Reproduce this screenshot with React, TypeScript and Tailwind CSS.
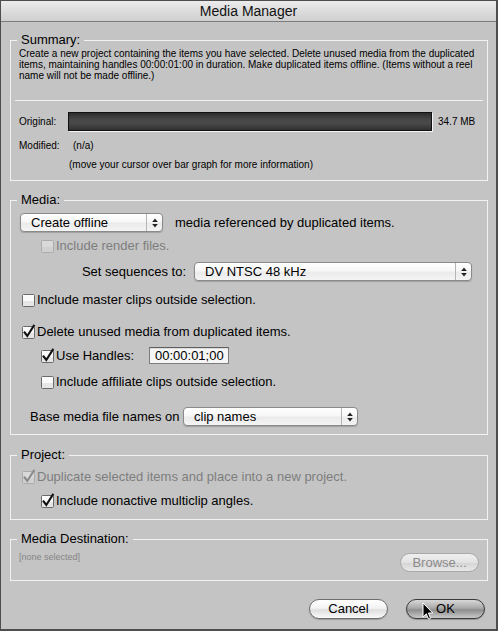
import React from "react";

function CheckBox({ checked = false, disabled = false }: { checked?: boolean; disabled?: boolean }) {
  const stroke = disabled ? "#ababab" : "#6a6a6a";
  const fill = disabled ? "#d9d9d9" : "#fafafa";
  const lower = disabled ? "#d0d0d0" : "#e6e6e6";
  const mark = disabled ? "#8c8c8c" : "#111111";
  return (
    <svg width="13" height="14" viewBox="0 0 13 14" className="shrink-0 overflow-visible">
      <rect x="0.5" y="1.5" width="12" height="12" rx="1" fill={fill} stroke={stroke} />
      <rect x="1" y="8" width="11" height="5" fill={lower} />
      {checked && (
        <path
          d="M2.6 7.4 L5.3 11 L11.8 0.8"
          fill="none"
          stroke={mark}
          strokeWidth="2.1"
          strokeLinecap="square"
          strokeLinejoin="miter"
        />
      )}
    </svg>
  );
}

function CheckRow({
  label,
  checked,
  disabled,
  indent,
  className,
}: {
  label: string;
  checked?: boolean;
  disabled?: boolean;
  indent?: boolean;
  className: string;
}) {
  return (
    <div
      className={`${className} flex h-[14px] items-center gap-[2px] ${indent ? "pl-[30px]" : "pl-[11px]"} text-[13px] leading-[14px] whitespace-nowrap ${
        disabled ? "text-[#7e7e7e]" : "text-black"
      }`}
    >
      <CheckBox checked={checked} disabled={disabled} />
      <span>{label}</span>
    </div>
  );
}

function Arrows() {
  return (
    <div className="ml-auto flex h-full w-[16px] items-center justify-center border-l border-[#b4b4b4]">
      <svg width="6" height="10" viewBox="0 0 6 10">
        <path d="M3 0.5 L5.8 4 L0.2 4 Z" fill="#222" />
        <path d="M3 9.5 L5.8 6 L0.2 6 Z" fill="#222" />
      </svg>
    </div>
  );
}

const popupCls =
  "flex h-[19px] items-center rounded-[4px] border border-[#8a8a8a] bg-[linear-gradient(to_bottom,#ffffff,#f7f7f7_45%,#ebebeb_55%,#f4f4f4)] shadow-[0_1px_1px_rgba(0,0,0,0.18)] text-[13px] leading-[17px] text-black whitespace-nowrap overflow-hidden";

const fsCls = "border border-[#f2f2f2] px-0";
const legendCls = "ml-[6px] px-[4px] text-[13px] leading-[16px] text-black";

export default function App() {
  return (
    <div className="relative h-[631px] w-[498px] overflow-hidden border-t border-l border-r-2 border-b-2 border-[#4e4e4e] bg-[#c4c4c4] font-['Liberation_Sans',Arial,sans-serif] text-black">
      {/* title bar */}
      <div className="flex h-[21px] items-center justify-center border-b border-[#7c7c7c] bg-[linear-gradient(to_bottom,#ececec,#dadada_60%,#cfcfcf)] text-[14px] leading-[20px] text-[#111]">
        Media Manager
      </div>

      <div className="pl-[9px] pr-[8px]">
        {/* Summary */}
        <fieldset className={`mt-[10px] pb-[8px] ${fsCls}`}>
          <legend className={legendCls}>Summary:</legend>
          <p className="pl-[8px] text-[10px] leading-[11px] whitespace-nowrap">
            Create a new project containing the items you have selected. Delete unused media from the duplicated
            <br />
            items, maintaining handles 00:00:01:00 in duration. Make duplicated items offline. (Items without a reel
            <br />
            name will not be made offline.)
          </p>
          <div className="mx-[4px] mt-[19px] h-px bg-[#f2f2f2]" />
          <div className="mt-[11px] flex h-[19px] items-center pl-[8px] text-[10px]">
            <span className="w-[49px]">Original:</span>
            <div className="h-[19px] w-[364px] border border-[#111] bg-[linear-gradient(to_bottom,#2c2c2c,#454545_35%,#4a4a4a_60%,#303030)] shadow-[1px_1px_0_#f4f4f4]" />
            <span className="ml-[6px]">34.7 MB</span>
          </div>
          <div className="mt-[7px] flex h-[14px] items-center pl-[8px] text-[10px]">
            <span className="w-[54px]">Modified:</span>
            <span>(n/a)</span>
          </div>
          <div className="mt-[6px] h-[14px] pl-[58px] text-[10px] leading-[14px]">
            (move your cursor over bar graph for more information)
          </div>
        </fieldset>

        {/* Media */}
        <fieldset className={`mt-[11px] pb-[8px] ${fsCls}`}>
          <legend className={legendCls}>Media:</legend>
          <div className="mt-[5px] flex h-[19px] items-center pl-[9px]">
            <div className={`${popupCls} w-[143px]`}>
              <span className="pl-[10px]">Create offline</span>
              <Arrows />
            </div>
            <span className="ml-[12px] text-[13px]">media referenced by duplicated items.</span>
          </div>
          <CheckRow className="mt-[7px]" indent disabled label="Include render files." />
          <div className="mt-[9px] flex h-[19px] items-center">
            <span className="w-[175px] text-right text-[13px]">Set sequences to:</span>
            <div className={`${popupCls} ml-[8px] w-[278px]`}>
              <span className="pl-[10px]">DV NTSC 48 kHz</span>
              <Arrows />
            </div>
          </div>
          <CheckRow className="mt-[12px]" label="Include master clips outside selection." />
          <CheckRow className="mt-[18px]" checked label="Delete unused media from duplicated items." />
          <div className="mt-[8px] flex h-[17px] items-center pl-[30px] text-[13px]">
            <CheckBox checked />
            <span className="ml-[2px] w-[93px]">Use Handles:</span>
            <div className="flex h-[17px] w-[80px] items-center border border-[#7d7d7d] border-t-[#5e5e5e] bg-[#f6f6f6] pl-[5px] leading-[15px] shadow-[inset_0_1px_1px_rgba(0,0,0,0.12)]">
              00:00:01;00
            </div>
          </div>
          <CheckRow className="mt-[11px]" indent label="Include affiliate clips outside selection." />
          <div className="mt-[18px] flex h-[19px] items-center pl-[19px]">
            <span className="w-[153px] text-[13px]">Base media file names on</span>
            <div className={`${popupCls} w-[175px]`}>
              <span className="pl-[10px]">clip names</span>
              <Arrows />
            </div>
          </div>
        </fieldset>

        {/* Project */}
        <fieldset className={`mt-[12px] pb-[11px] ${fsCls}`}>
          <legend className={legendCls}>Project:</legend>
          <CheckRow className="mt-[7px]" checked disabled label="Duplicate selected items and place into a new project." />
          <CheckRow className="mt-[10px]" indent checked label="Include nonactive multiclip angles." />
        </fieldset>

        {/* Media Destination */}
        <fieldset className={`mt-[11px] pb-[8px] ${fsCls}`}>
          <legend className={legendCls}>Media Destination:</legend>
          <div className="mt-[6px] flex h-[19px] items-start justify-between pl-[8px] pr-[8px]">
            <span className="-mt-[2px] text-[9px] leading-[12px] text-[#858585]">[none selected]</span>
            <div className="flex h-[19px] w-[79px] items-center justify-center rounded-full border border-[#a9a9a9] bg-[linear-gradient(to_bottom,#efefef,#e2e2e2_50%,#d6d6d6_55%,#e8e8e8)] text-[13px] text-[#8a8a8a]">
              Browse...
            </div>
          </div>
        </fieldset>

        {/* Buttons */}
        <div className="mt-[18px] flex h-[20px] justify-end gap-[18px] pr-[3px]">
          <div className="flex h-[20px] w-[79px] items-center justify-center rounded-full border border-[#6e6e6e] bg-[linear-gradient(to_bottom,#ffffff,#f3f3f3_45%,#dedede_55%,#fafafa)] text-[13px] shadow-[0_1px_1px_rgba(0,0,0,0.2)]">
            Cancel
          </div>
          <div className="relative flex h-[20px] w-[79px] items-center justify-center rounded-full border border-[#3a3a3a] bg-[linear-gradient(to_bottom,#d8d8d8,#a9a9a9_45%,#8e8e8e_55%,#c9c9c9)] text-[13px] shadow-[0_1px_1px_rgba(0,0,0,0.25)]">
            OK
            <svg
              className="absolute left-[15px] top-[2px]"
              width="12"
              height="19"
              viewBox="0 0 12 19"
            >
              <path
                d="M1 1 L1 15 L4.3 11.8 L6.6 17.2 L8.6 16.3 L6.4 11 L10.8 11 Z"
                fill="#000"
                stroke="#fff"
                strokeWidth="1"
                strokeLinejoin="round"
              />
            </svg>
          </div>
        </div>
      </div>
    </div>
  );
}
